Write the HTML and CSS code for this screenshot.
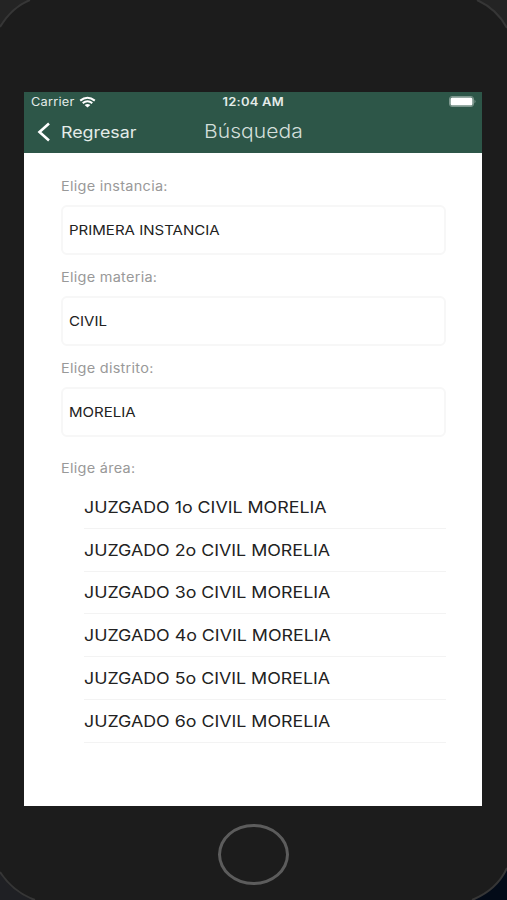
FILE: index.html
```html
<!DOCTYPE html>
<html lang="es">
  <head>
    <meta charset="UTF-8" />
    <title>Búsqueda</title>
    <link rel="stylesheet" href="styles.css">
  </head>
  <body>
    <div class="phone">
      <svg class="bezel" viewBox="0 0 507 900">
        <path fill="#242424" d="M0 0H30Q12 7 0 27ZM477 0H507V28Q497 9 477 0Z" />
        <path fill="#1f2024" d="M0 872Q13 892 35 900H0Z" />
        <path fill="#030b18" d="M507 868Q497 890 472 900H507Z" />
        <path class="edge" d="M30 0Q12 7 0 27M477 0Q497 9 507 28M0 872Q13 892 35 900M507 868Q497 890 472 900" />
      </svg>

      <div class="screen">
        <header>
          <div class="status-bar">
            <div class="carrier">
              <span>Carrier</span>
              <svg class="wifi" viewBox="0 0 17 12">
                <path d="M1.2 4.6Q8.500 -1.200 15.800 4.600M3.700 7.100Q8.500 3.500 13.300 7.100" />
                <path class="dot" d="M5.600 8.900Q8.500 6.900 11.400 8.900L8.500 11.600Z" />
              </svg>
            </div>
            <span class="time">12:04 AM</span>
            <svg class="battery" viewBox="0 0 27 11">
              <rect class="shell" x="0.500" y="0.500" width="24" height="10" rx="2.500" />
              <rect x="1.500" y="1.500" width="22" height="8" rx="1.500" />
              <path class="tip" d="M25.500 3.500Q27.500 5.500 25.500 7.500Z" />
            </svg>
          </div>
          <nav>
            <a class="back">
              <svg viewBox="0 0 14 20"><path d="M12 1.500L2.500 10L12 18.500" /></svg>
              <span>Regresar</span>
            </a>
            <h1>Búsqueda</h1>
          </nav>
        </header>

        <main>
          <label>Elige instancia:</label>
          <div class="field"><span>PRIMERA INSTANCIA</span></div>
          <label>Elige materia:</label>
          <div class="field"><span>CIVIL</span></div>
          <label>Elige distrito:</label>
          <div class="field"><span>MORELIA</span></div>
          <label class="area">Elige área:</label>
          <ul>
            <li><span>JUZGADO 1o CIVIL MORELIA</span></li>
            <li><span>JUZGADO 2o CIVIL MORELIA</span></li>
            <li><span>JUZGADO 3o CIVIL MORELIA</span></li>
            <li><span>JUZGADO 4o CIVIL MORELIA</span></li>
            <li><span>JUZGADO 5o CIVIL MORELIA</span></li>
            <li><span>JUZGADO 6o CIVIL MORELIA</span></li>
          </ul>
        </main>
      </div>

      <div class="home"></div>
    </div>
  </body>
</html>
```
FILE: styles.css
```css
* {
  box-sizing: border-box;
}
body {
  margin: 0;
  font-family: Inter, "Liberation Sans", sans-serif;
  background-color: #1c1c1c;
}
.phone {
  position: relative;
  width: 507px;
  height: 900px;
  padding: 92px 25px 0 24px;
  overflow: hidden;
}
.bezel {
  position: absolute;
  left: 0;
  top: 0;
  width: 507px;
  height: 900px;
}
.bezel .edge {
  fill: none;
  stroke: #363636;
  stroke-width: 2;
}
.screen {
  height: 714px;
  background-color: #fff;
}

/* wide lettering */
.carrier span,
.back span,
.field span,
li span,
label {
  transform: scaleX(1.113);
  transform-origin: left;
}

header {
  height: 61px;
  color: #e4ece9;
  background-color: #2d5648;
}
.status-bar {
  display: grid;
  grid-template-columns: 1fr auto 1fr;
  align-items: center;
  height: 19px;
  padding: 0 6px 0 7px;
  font-size: 11.5px;
}
.carrier {
  display: flex;
  align-items: center;
  gap: 9px;
  letter-spacing: 0.2px;
}
.wifi {
  width: 17px;
  height: 12px;
  fill: none;
  stroke: #fff;
  stroke-width: 2;
}
.wifi .dot {
  fill: #fff;
  stroke: none;
}
.time {
  font-weight: 600;
  letter-spacing: 0.2px;
  transform: scaleX(1.13);
}
.battery {
  justify-self: end;
  width: 27px;
  height: 11px;
  fill: #fff;
}
.battery .shell {
  fill: none;
  stroke: #7d978e;
}
.battery .tip {
  fill: #7d978e;
}

nav {
  display: grid;
  grid-template-columns: 1fr auto 1fr;
  align-items: center;
  height: 42px;
  padding-left: 13px;
  padding-right: 13px;
}
.back {
  display: flex;
  align-items: center;
  gap: 10px;
  font-size: 16px;
}
.back svg {
  width: 14px;
  height: 20px;
  fill: none;
  stroke: #fff;
  stroke-width: 2.6;
}
h1 {
  margin: 0;
  font-size: 19px;
  font-weight: 300;
  line-height: 24px;
  color: #d3dfda;
  transform: scaleX(1.11);
}

main {
  padding: 22px 36px 0 37px;
}
label {
  display: block;
  height: 22px;
  margin-bottom: 8px;
  line-height: 22px;
  font-size: 13px;
  letter-spacing: 0.25px;
  color: #999;
}
.field {
  display: flex;
  align-items: center;
  height: 50px;
  margin-bottom: 11px;
  padding: 0 6px;
  border: 2px solid #f7f7f7;
  border-radius: 6px;
  font-size: 13.5px;
  color: #222;
}
.area {
  margin-top: 20px;
  margin-bottom: 7px;
}
ul {
  margin: 0;
  padding: 0 0 0 23px;
  list-style: none;
}
li {
  display: flex;
  align-items: center;
  height: 42.8px;
  border-bottom: 1.5px solid #f3f3f3;
  font-size: 16px;
  color: #222;
}

.home {
  width: 71px;
  height: 61px;
  margin: 18px auto 0;
  border: 3px solid #5c5c5c;
  border-radius: 50%;
}
```
